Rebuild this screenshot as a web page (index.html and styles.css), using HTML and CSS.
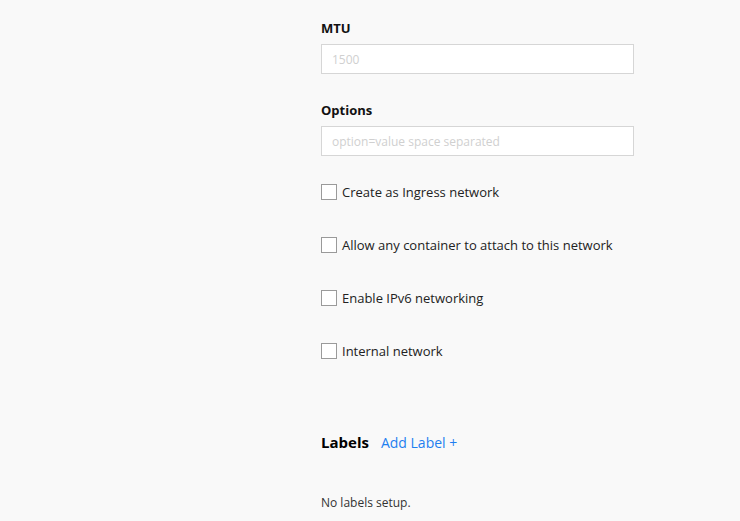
FILE: index.html
```html
<!DOCTYPE html>
<html>
<head>
<meta charset="utf-8">
<link rel="stylesheet" href="styles.css">
</head>
<body>
<div class="page">
  <div class="form">
    <div class="field">
      <label class="field-label">MTU</label>
      <input class="text-input" type="text" placeholder="1500">
    </div>
    <div class="field">
      <label class="field-label">Options</label>
      <input class="text-input" type="text" placeholder="option=value space separated">
    </div>
    <div class="checks">
      <label class="check"><span class="box"></span>Create as Ingress network</label>
      <label class="check"><span class="box"></span>Allow any container to attach to this network</label>
      <label class="check"><span class="box"></span>Enable IPv6 networking</label>
      <label class="check"><span class="box"></span>Internal network</label>
    </div>
    <div class="labels-head">
      <h3 class="labels-title">Labels</h3>
      <a class="add-link">Add Label +</a>
    </div>
    <p class="empty">No labels setup.</p>
  </div>
</div>
</body>
</html>
```
FILE: styles.css
```css
html, body {
  margin: 0;
  padding: 0;
  background: #f9f9f9;
  font-family: "Open Sans", "Noto Sans", sans-serif;
  color: #222;
}
.page {
  padding-left: 321px;
  padding-top: 19px;
}
.form {
  width: 313px;
}
.field {
  display: flex;
  flex-direction: column;
  margin-bottom: 27px;
}
.field-label {
  font-size: 13px;
  font-weight: 700;
  line-height: 18px;
  margin-bottom: 7px;
  color: #111;
}
.text-input {
  box-sizing: border-box;
  height: 30px;
  border: 1px solid #d6d6d6;
  background: #fff;
  padding: 0 10px;
  font-family: "Open Sans", sans-serif;
  font-size: 12px;
  outline: none;
}
.text-input::placeholder {
  color: #d0d0d0;
}
.checks {
  display: flex;
  flex-direction: column;
  gap: 35px;
  margin-top: 9px;
}
.check {
  display: flex;
  align-items: center;
  gap: 5px;
  font-size: 13px;
  line-height: 18px;
  color: #222;
}
.box {
  box-sizing: border-box;
  width: 16px;
  height: 16px;
  border: 1px solid #9a9a9a;
  background: #fff;
}
.labels-head {
  display: flex;
  align-items: baseline;
  gap: 12px;
  margin-top: 72px;
}
.labels-title {
  margin: 0;
  font-size: 15px;
  font-weight: 700;
  color: #000;
}
.add-link {
  font-size: 14px;
  color: #1e7ff0;
  cursor: pointer;
}
.empty {
  margin: 42px 0 0;
  font-size: 12px;
  color: #333;
}
```
